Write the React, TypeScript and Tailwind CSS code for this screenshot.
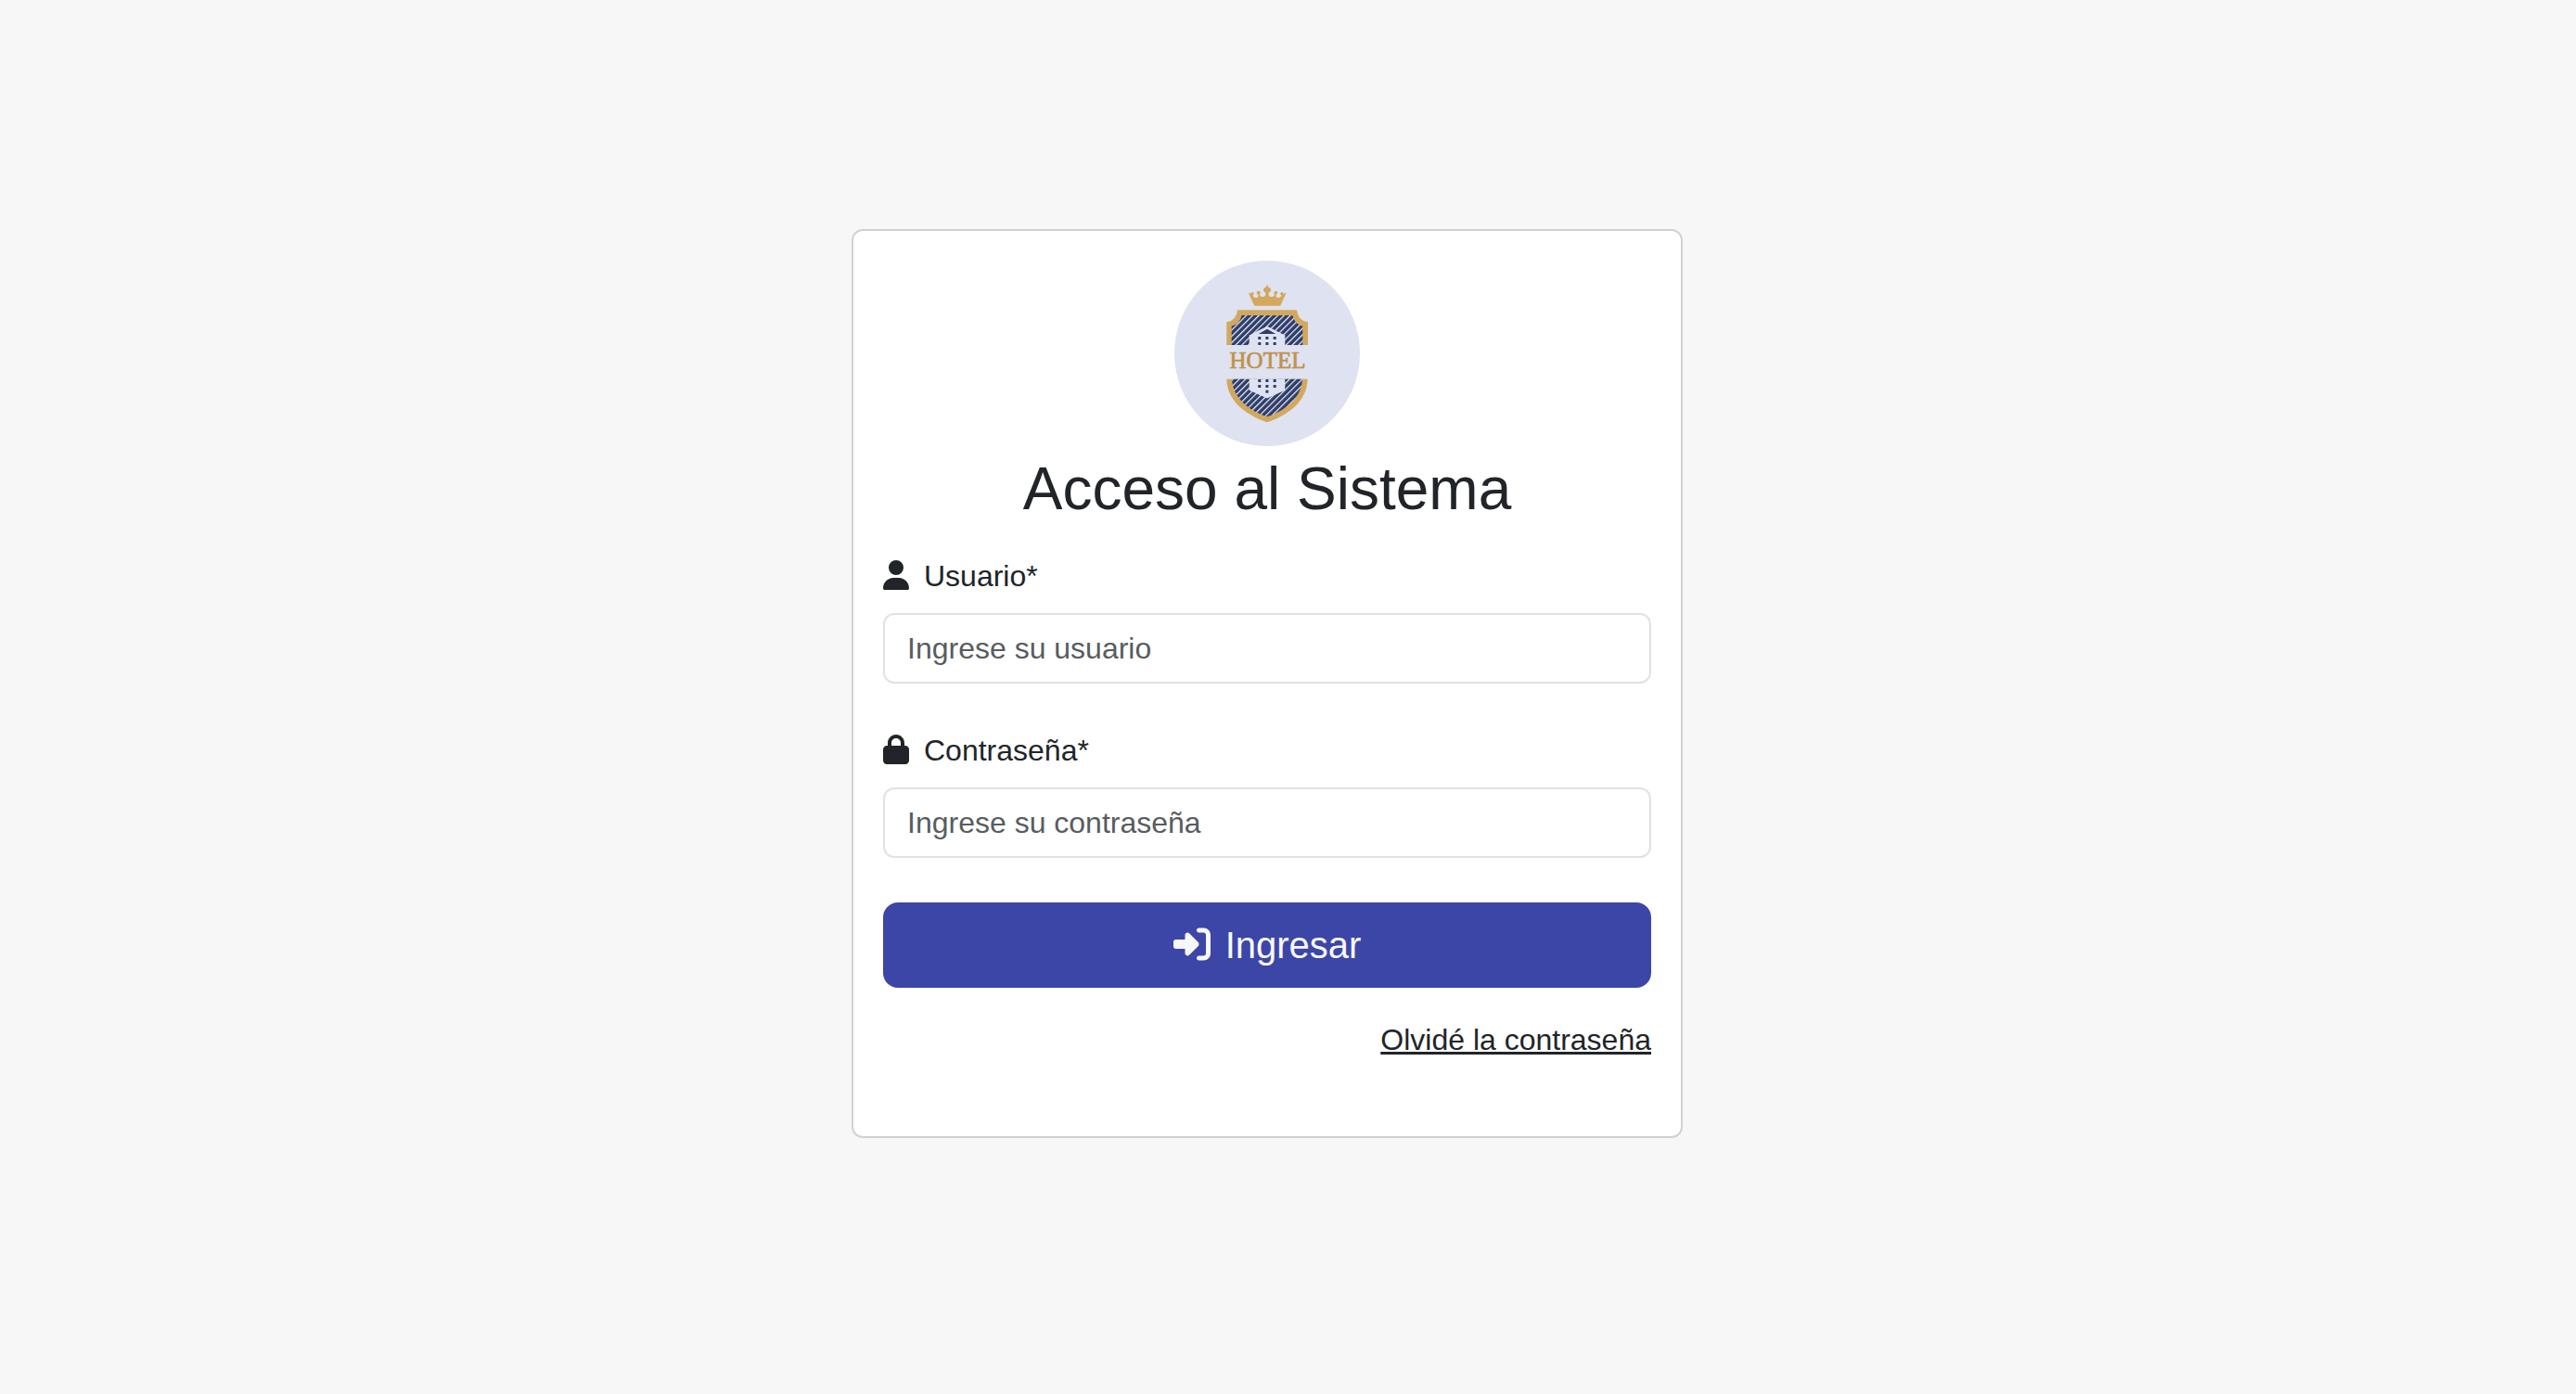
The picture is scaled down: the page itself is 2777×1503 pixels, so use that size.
import type { ReactNode } from "react";
import { FaLock, FaRightToBracket, FaUser } from "react-icons/fa6";

const GOLD = "#d3a85c";
const NAVY = "#2e3d69";
const PALE = "#dee2f1";

function HotelLogo() {
  return (
    <svg viewBox="0 0 200 200" className="mx-auto block size-[200px]" role="img" aria-label="Hotel">
      <defs>
        <pattern id="stripes" width="4.800" height="4.800" patternUnits="userSpaceOnUse" patternTransform="rotate(45)">
          <rect width="4.800" height="4.800" fill={NAVY} />
          <rect width="1.200" height="4.800" fill="#f3f5fb" />
        </pattern>
      </defs>
      <circle cx="100" cy="100" r="100" fill={PALE} />

      {/* crown */}
      <g fill={GOLD}>
        <path d="M86.300 48.700 L79.700 34.600 Q82 36.500 84.600 35.200 Q83.800 40 88.300 40 Q91.300 39.700 90.300 36 H91.800 Q92.500 39.600 96 39 Q99 38.300 98.200 34 H101.800 Q101 38.300 104 39 Q107.500 39.600 108.200 36 H109.700 Q108.700 39.700 111.700 40 Q116.200 40 115.400 35.200 Q118 36.500 120.700 34.600 L114.300 48.700 Z" />
        <circle cx="90.700" cy="34.800" r="2" />
        <circle cx="109.300" cy="34.800" r="2" />
        <circle cx="84" cy="35.800" r="1.800" />
        <circle cx="116" cy="35.800" r="1.800" />
        <ellipse cx="100" cy="31.600" rx="4" ry="3.100" />
        <path d="M100 25.500 L101.600 30 H98.400 Z" />
      </g>

      {/* upper half of the shield */}
      <path d="M68 53.300 H132 Q133 65 144 66.300 V91 H56.300 V66.300 Q67 65 68 53.300 Z" fill={GOLD} />
      <path d="M72.700 59 H127.300 Q129.500 68.500 138.300 70.700 V91 H61.700 V70.700 Q70.500 68.500 72.700 59 Z" fill="url(#stripes)" />

      {/* lower half of the shield */}
      <path d="M56.300 127.700 H143.600 C143 151 124 166 100 174.300 C76 166 57 151 56.300 127.700 Z" fill={GOLD} />
      <path d="M62 127.700 H138 C137 148 120 161.500 100 168.300 C80 161.500 63 148 62 127.700 Z" fill="url(#stripes)" />

      {/* building */}
      <path d="M100 70.700 L119.300 80.500 V91.200 H80.700 V80.500 Z" fill={PALE} />
      <path d="M80.700 127.500 H119.300 V139.700 L100 148.500 L80.700 139.700 Z" fill={PALE} />
      <g fill={NAVY}>
        <path d="M100 73.700 L109.300 78.900 H90.700 Z" />
        {[82, 88, 128, 134].map((y) =>
          [90.3, 98.4, 106.7].map((x) => <rect key={`${x}-${y}`} x={x} y={y} width="3" height="3" />),
        )}
        <rect x="98.400" y="139.700" width="3" height="3" />
      </g>

      <text x="100.500" y="116" textAnchor="middle" fontFamily="'Liberation Serif', serif" fontSize="25" fill="#c0924a" stroke="#c0924a" strokeWidth="0.700">
        HOTEL
      </text>
    </svg>
  );
}

type FieldProps = {
  id: string;
  label: string;
  type: string;
  placeholder: string;
  icon: ReactNode;
};

function Field({ id, label, type, placeholder, icon }: FieldProps) {
  return (
    <div className="mb-12">
      <label htmlFor={id} className="mb-4 block">
        {icon}
        {label}
      </label>
      <input
        id={id}
        type={type}
        placeholder={placeholder}
        className="block w-full rounded-xl border-2 border-[#dee2e6] bg-white px-6 py-3 placeholder:text-[#595c5f] placeholder:opacity-100"
      />
    </div>
  );
}

export default function App() {
  return (
    <main className="flex min-h-screen items-center justify-center bg-[#f7f7f7] pr-[45px] pb-[29px] font-['Liberation_Sans',Arial,sans-serif] text-[32px] leading-[48px] text-[#212529]">
      <section className="w-full max-w-4xl rounded-xl border-2 border-[#d2d2d2] bg-white px-8 pt-8 pb-20">
        <HotelLogo />
        <h1 className="mt-2 mb-8 text-center text-[64px] leading-[76px]">Acceso al Sistema</h1>
        <form onSubmit={(e) => e.preventDefault()}>
          <Field
            id="usuario"
            label="Usuario*"
            type="text"
            placeholder="Ingrese su usuario"
            icon={<FaUser className="mr-4 inline-block h-8 w-7 align-[-4px]" />}
          />
          <Field
            id="contrasena"
            label="Contraseña*"
            type="password"
            placeholder="Ingrese su contraseña"
            icon={<FaLock className="mr-4 inline-block h-8 w-7 align-[-4px]" />}
          />
          <button
            type="submit"
            className="block w-full rounded-2xl bg-[#3c46a6] py-4 text-[40px] leading-[60px] text-[#f7f7f7]"
          >
            <FaRightToBracket className="mr-4 inline-block size-10 align-[-5px]" />
            Ingresar
          </button>
        </form>
        <div className="mt-8 text-right">
          <a href="#recuperar" className="underline">
            Olvidé la contraseña
          </a>
        </div>
      </section>
    </main>
  );
}
